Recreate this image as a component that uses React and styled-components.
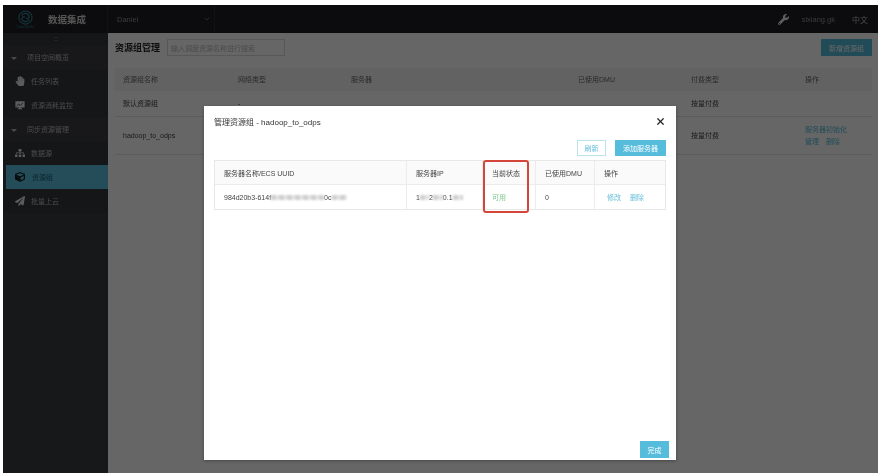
import React from 'react'
import styled, { createGlobalStyle } from 'styled-components'
import { ChevronDown, X } from 'lucide-react'
import { FaHandPaper, FaSitemap, FaCube, FaPaperPlane, FaWrench } from 'react-icons/fa'

const GlobalStyle = createGlobalStyle`
  html, body {
    margin: 0;
    background: #fff;
  }
  body {
    font-family: "Liberation Sans", "Noto Sans CJK SC", sans-serif;
    font-size: 7px;
    overflow: hidden;
  }
`

const Page = styled.div`
  position: relative;
  width: 875px;
  height: 468px;
  margin: 5px 0 0 3px;
  display: grid;
  grid-template-rows: 28px 1fr;
  background: #fff;
  filter: blur(0.45px);
  overflow: hidden;
`

const Header = styled.header`
  display: flex;
  align-items: center;
  background: #1e2023;
`

const Brand = styled.div`
  width: 105px;
  height: 100%;
  display: flex;
  align-items: center;
  gap: 10px;
  padding-left: 10px;
  box-sizing: border-box;
  border-right: 1px solid #2c2e32;
`

const LogoWrap = styled.div`
  width: 25px;
  display: flex;
  flex-direction: column;
  align-items: center;
  color: #2f7f94;
  font-size: 3.5px;
  line-height: 4px;
`

const BrandName = styled.div`
  color: #d6d6d6;
  font-size: 9.5px;
  font-weight: bold;
`

const ProjectSelect = styled.div`
  width: 107px;
  height: 100%;
  box-sizing: border-box;
  padding: 0 3px 0 9px;
  display: flex;
  align-items: center;
  justify-content: space-between;
  color: #8f9195;
  font-size: 7.5px;
  border-right: 1px solid #2c2e32;
`

const HeaderRight = styled.div`
  margin-left: auto;
  display: flex;
  align-items: center;
  padding-right: 10px;
  color: #b5b5b5;
  font-size: 8px;
`

const UserName = styled.span`
  margin: 0 17px 0 13px;
  color: #8f9195;
  font-size: 7.5px;
`

const Body = styled.div`
  display: grid;
  grid-template-columns: 105px 1fr;
  min-height: 0;
`

const Sidebar = styled.nav`
  background: #3a3c40;
  display: flex;
  flex-direction: column;
`

const Collapse = styled.div`
  height: 12px;
  background: #36383c;
  display: flex;
  align-items: center;
  justify-content: center;
`

const CollapseBar = styled.span`
  width: 4px;
  height: 2px;
  border-top: 1px solid #55575c;
  border-bottom: 1px solid #55575c;
`

const NavRow = styled.div`
  height: 24px;
  display: flex;
  align-items: center;
  margin-left: ${({ $active }) => ($active ? '3px' : '0')};
  padding-left: ${({ $active, $group }) => ($active ? '9px' : $group ? '8px' : '12px')};
  gap: ${({ $group, $active }) => ($group ? '10px' : $active ? '7px' : '6px')};
  background: ${({ $active, $group }) => ($active ? '#5bc0de' : $group ? '#3c3e42' : '#36383c')};
  color: ${({ $active }) => ($active ? '#1a5f73' : '#b9babc')};
  font-size: 7px;
  svg {
    color: ${({ $active }) => ($active ? '#16262c' : '#e6e6e6')};
    flex: none;
  }
`

const Caret = styled.span`
  width: 0;
  height: 0;
  margin-top: 3px;
  border-left: 3px solid transparent;
  border-right: 3px solid transparent;
  border-top: 3px solid #b9babc;
`

const Main = styled.main`
  background: #fff;
  padding: 6px 6px 0 7px;
`

const Toolbar = styled.div`
  display: flex;
  align-items: center;
  height: 17px;
  margin-bottom: 12px;
`

const PageTitle = styled.h1`
  margin: 0 7px 0 0;
  color: #222;
  font-size: 9px;
  font-weight: bold;
`

const Search = styled.div`
  width: 118px;
  height: 17px;
  box-sizing: border-box;
  border: 1px solid #ddd;
  padding-left: 3px;
  display: flex;
  align-items: center;
  color: #bbb;
  font-size: 7px;
`

const PrimaryButton = styled.button`
  margin-left: ${({ $push }) => ($push ? 'auto' : '0')};
  width: ${({ $width }) => $width}px;
  height: ${({ $height }) => $height || 16}px;
  padding: 0;
  border: 0;
  background: #55bcdc;
  color: #fff;
  font: inherit;
  font-size: 7px;
`

const GhostButton = styled.button`
  width: 29px;
  height: 16px;
  padding: 0;
  border: 1px solid #bfe3ee;
  background: #fff;
  color: #62bedc;
  font: inherit;
  font-size: 7px;
`

const PageGrid = styled.div`
  display: grid;
  grid-template-columns: 115px 113px 227px 113px 114px 1fr;
  align-items: center;
`

const PageHead = styled(PageGrid)`
  height: 23px;
  background: #f6f6f6;
  color: #666;
  font-size: 7px;
`

const PageRow = styled(PageGrid)`
  height: ${({ $height }) => $height}px;
  border-bottom: 1px solid #e6e6e6;
  box-sizing: border-box;
  color: #444;
  font-size: 7px;
`

const PageCell = styled.div`
  padding-left: 8px;
  line-height: 12px;
`

const PageLink = styled.span`
  color: #55bcdc;
  margin-right: ${({ $gap }) => $gap || 0}px;
`

const Overlay = styled.div`
  position: absolute;
  inset: 0;
  background: rgba(0, 0, 0, 0.6);
  display: flex;
  justify-content: center;
  align-items: flex-start;
  padding: 101px 1px 0 0;
`

const Modal = styled.section`
  width: 472px;
  height: 354px;
  box-sizing: border-box;
  background: #fff;
  padding: 0 10px;
  display: flex;
  flex-direction: column;
  box-shadow: 0 1px 3px rgba(0, 0, 0, 0.3);
`

const ModalHeader = styled.div`
  height: 30px;
  display: flex;
  align-items: center;
  justify-content: space-between;
`

const ModalTitle = styled.h2`
  margin: 0;
  color: #333;
  font-size: 8px;
  font-weight: normal;
`

const ModalActions = styled.div`
  display: flex;
  justify-content: flex-end;
  gap: 9px;
  margin: 4px 0;
`

const TableWrap = styled.div`
  position: relative;
  border: 1px solid #e8e8e8;
  height: 50px;
  box-sizing: border-box;
`

const ServerGrid = styled.div`
  display: grid;
  grid-template-columns: 191px 76px 53px 59px 1fr;
  height: ${({ $height }) => $height}px;
  background: ${({ $head }) => ($head ? '#fafafa' : '#fff')};
  border-bottom: ${({ $head }) => ($head ? '1px solid #ececec' : '0')};
  box-sizing: border-box;
`

const ServerCell = styled.div`
  display: flex;
  align-items: center;
  padding-left: 9px;
  color: ${({ $ok }) => ($ok ? '#7cc88c' : '#444')};
  font-size: 7px;
  border-left: ${({ $first }) => ($first ? '0' : '1px solid #ececec')};
  white-space: nowrap;
`

const Redacted = styled.span`
  display: inline-block;
  width: ${({ $width }) => $width}px;
  height: 5px;
  background: repeating-linear-gradient(90deg, #cfcfcf 0 5px, #e6e6e6 5px 8px);
  filter: blur(1px);
`

const RowLink = styled.span`
  color: #62bedc;
  margin-left: ${({ $left }) => $left}px;
`

const Highlight = styled.div`
  position: absolute;
  left: 268px;
  top: -1px;
  width: 46px;
  height: 53px;
  box-sizing: border-box;
  border: 2px solid #d4463a;
  border-radius: 3px;
`

const ModalFooter = styled.div`
  margin-top: auto;
  margin-right: -3px;
  margin-bottom: 2px;
  display: flex;
  justify-content: flex-end;
`

const Logo = () => (
  <svg width="15" height="15" viewBox="0 0 24 24" fill="none" stroke="currentColor" strokeWidth="1.8">
    <circle cx="12" cy="12" r="10.5" />
    <path d="M6 9a6.5 6.5 0 0 1 12 1c0 3-3 4-5 3" />
    <path d="M18 15a6.5 6.5 0 0 1-12-1c0-3 3-4 5-3" />
  </svg>
)

// monitor with a small line chart on the screen
const ChartMonitor = ({ size }) => (
  <svg width={size} height={size} viewBox="0 0 24 24">
    <path fill="currentColor" d="M1 3h22v15H14v2h3v2H7v-2h3v-2H1z" />
    <path fill="none" stroke="#36383c" strokeWidth="2" d="M4 14l5-4 4 3 6-6" />
  </svg>
)

const navItems = [
  { label: '项目空间概览', group: true },
  { label: '任务列表', icon: FaHandPaper },
  { label: '资源消耗监控', icon: ChartMonitor },
  { label: '同步资源管理', group: true },
  { label: '数据源', icon: FaSitemap },
  { label: '资源组', icon: FaCube, active: true },
  { label: '批量上云', icon: FaPaperPlane },
]

export default function App() {
  return (
    <>
      <GlobalStyle />
      <Page>
        <Header>
          <Brand>
            <LogoWrap>
              <Logo />
              DataWorks
            </LogoWrap>
            <BrandName>数据集成</BrandName>
          </Brand>
          <ProjectSelect>
            Daniel
            <ChevronDown size={8} />
          </ProjectSelect>
          <HeaderRight>
            <FaWrench size={11} color="#e8e8e8" />
            <UserName>sixiang.gk</UserName>
            中文
          </HeaderRight>
        </Header>
        <Body>
          <Sidebar>
            <Collapse>
              <CollapseBar />
            </Collapse>
            {navItems.map(item => (
              <NavRow key={item.label} $group={item.group} $active={item.active}>
                {item.group ? <Caret /> : <item.icon size={10} />}
                {item.label}
              </NavRow>
            ))}
          </Sidebar>
          <Main>
            <Toolbar>
              <PageTitle>资源组管理</PageTitle>
              <Search>输入调度资源名称进行搜索</Search>
              <PrimaryButton $push $width={51} $height={17}>新增资源组</PrimaryButton>
            </Toolbar>
            <PageHead>
              <PageCell>资源组名称</PageCell>
              <PageCell>网络类型</PageCell>
              <PageCell>服务器</PageCell>
              <PageCell>已使用DMU</PageCell>
              <PageCell>付费类型</PageCell>
              <PageCell>操作</PageCell>
            </PageHead>
            <PageRow $height={26}>
              <PageCell>默认资源组</PageCell>
              <PageCell>-</PageCell>
              <PageCell />
              <PageCell />
              <PageCell>按量付费</PageCell>
              <PageCell />
            </PageRow>
            <PageRow $height={38}>
              <PageCell>hadoop_to_odps</PageCell>
              <PageCell />
              <PageCell />
              <PageCell />
              <PageCell>按量付费</PageCell>
              <PageCell>
                <PageLink>服务器初始化</PageLink>
                <br />
                <PageLink $gap={7}>管理</PageLink>
                <PageLink>删除</PageLink>
              </PageCell>
            </PageRow>
          </Main>
        </Body>
        <Overlay>
          <Modal>
            <ModalHeader>
              <ModalTitle>管理资源组 - hadoop_to_odps</ModalTitle>
              <X size={11} color="#222" strokeWidth={2.6} />
            </ModalHeader>
            <ModalActions>
              <GhostButton>刷新</GhostButton>
              <PrimaryButton $width={51}>添加服务器</PrimaryButton>
            </ModalActions>
            <TableWrap>
              <ServerGrid $head $height={24}>
                <ServerCell $first>服务器名称/ECS UUID</ServerCell>
                <ServerCell>服务器IP</ServerCell>
                <ServerCell>当前状态</ServerCell>
                <ServerCell>已使用DMU</ServerCell>
                <ServerCell>操作</ServerCell>
              </ServerGrid>
              <ServerGrid $height={24}>
                <ServerCell $first>
                  984d20b3-614f<Redacted $width={53} />0c<Redacted $width={15} />
                </ServerCell>
                <ServerCell>
                  1<Redacted $width={9} />2<Redacted $width={10} />0.1<Redacted $width={10} />
                </ServerCell>
                <ServerCell $ok>可用</ServerCell>
                <ServerCell>0</ServerCell>
                <ServerCell>
                  <RowLink $left={3}>修改</RowLink>
                  <RowLink $left={9}>删除</RowLink>
                </ServerCell>
              </ServerGrid>
              <Highlight />
            </TableWrap>
            <ModalFooter>
              <PrimaryButton $width={29} $height={17}>完成</PrimaryButton>
            </ModalFooter>
          </Modal>
        </Overlay>
      </Page>
    </>
  )
}
